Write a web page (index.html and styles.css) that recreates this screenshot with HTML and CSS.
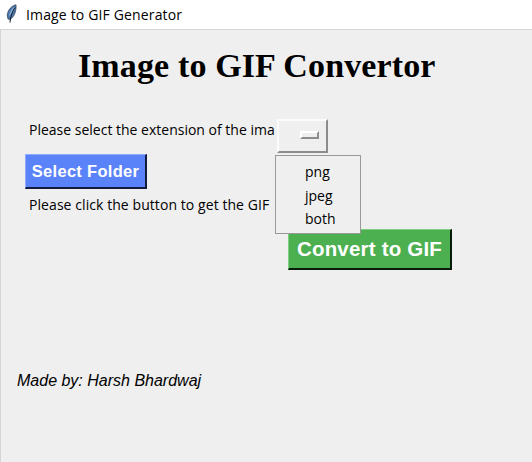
FILE: index.html
```html
<!DOCTYPE html>
<html lang="en">
<head>
<meta charset="utf-8">
<title>Image to GIF Generator</title>
<link rel="stylesheet" href="styles.css">
</head>
<body>
<header class="titlebar">
  <svg class="feather" width="14" height="20" viewBox="0 0 14 20">
    <path d="M11 .8C7 1.500 2.500 6 2.200 11.500L3 15L5 15.500C9 13 11.500 7.500 11 .8Z" fill="#4a76a8" stroke="#34465f" stroke-width=".8"/>
    <path d="M9.800 2.500C7 4 4.500 8 4 12.500C7 9 8.500 6 9.800 2.500Z" fill="#83b0dc"/>
    <path d="M10 3.500C7.500 7 5.500 12 5 18.500" fill="none" stroke="#18202c" stroke-width="1"/>
  </svg>
  <span class="caption">Image to GIF Generator</span>
</header>
<main class="window">
  <h1 class="heading">Image to GIF Convertor</h1>
  <div class="row row-extension">
    <label class="label label-extension">Please select the extension of the ima</label>
    <div class="option">
      <button class="option-button" aria-label="Extension"><span class="indicator"></span></button>
      <ul class="menu">
        <li>png</li>
        <li>jpeg</li>
        <li>both</li>
      </ul>
    </div>
  </div>
  <button class="button button-folder"><span>Select Folder</span></button>
  <div class="label label-convert">Please click the button to get the GIF</div>
  <button class="button button-convert"><span>Convert to GIF</span></button>
  <footer class="credit">Made by: Harsh Bhardwaj</footer>
</main>
</body>
</html>
```
FILE: styles.css
```css
* { box-sizing: border-box; }
body {
  margin: 0;
  height: 462px;
  display: flex;
  flex-direction: column;
  overflow: hidden;
  background: #efefef;
  color: #000;
  font-family: "Open Sans", "Noto Sans", sans-serif;
}
.titlebar {
  display: flex;
  align-items: center;
  height: 29px;
  flex: none;
  padding-left: 5px;
  background: #fff;
}
.feather { flex: none; margin-top: -2px; }
.caption {
  margin-left: 7px;
  font-size: 14px;
  letter-spacing: .15px;
  line-height: 20px;
  white-space: nowrap;
}
.window {
  flex: 1;
  display: flex;
  flex-direction: column;
  align-items: flex-start;
  border-top: 1px solid #d4d6d6;
  border-left: 1px solid #d4d6d6;
}
.heading {
  margin: 16px 0 0 77px;
  height: 40px;
  font: bold 34px/40px "Liberation Serif", serif;
  letter-spacing: .13px;
  white-space: nowrap;
}
.row { display: flex; }
.row-extension { height: 35px; margin: 33px 0 0 28px; }
.label {
  font-size: 14px;
  line-height: 20px;
  white-space: nowrap;
}
.label-extension { width: 248px; padding-top: 1px; }
.option { position: relative; }
.option-button {
  display: flex;
  align-items: center;
  justify-content: flex-end;
  width: 51px;
  height: 34px;
  padding: 0 7px 2px 0;
  background: #efefef;
  border: 2px solid;
  border-color: #fbfbfb #8c8c8c #8c8c8c #fbfbfb;
}
.indicator {
  width: 19px;
  height: 8px;
  border: 2px solid;
  border-color: #fff #8c8c8c #8c8c8c #fff;
}
.menu {
  position: absolute;
  left: -2px;
  top: 36px;
  z-index: 1;
  width: 86px;
  height: 79px;
  margin: 0;
  padding: 4px 0 0 29px;
  list-style: none;
  background: #efefef;
  border: 1px solid #999;
  font-size: 14px;
  line-height: 23.5px;
}
.button {
  display: flex;
  align-items: center;
  justify-content: center;
  padding: 0;
  color: #fff;
  border-style: solid;
  white-space: nowrap;
}
.button-folder {
  width: 122px;
  height: 35px;
  margin: 0 0 0 24px;
  background: #5a83fa;
  border-width: 1px 2px 2px 1px;
  border-color: #8eabff #101a3c #101a3c #8eabff;
  font: bold 16.5px/20px "Liberation Sans", sans-serif;
  letter-spacing: .3px;
}
.label-convert { margin: 6px 0 0 28px; letter-spacing: .07px; }
.button-convert {
  width: 164px;
  height: 41px;
  margin: 14px 0 0 287px;
  padding-bottom: 1px;
  background: #4caf50;
  border-width: 1px 2px 2px 1px;
  border-color: #7fce82 #081c09 #081c09 #7fce82;
  font: bold 20.5px/24px "Liberation Sans", sans-serif;
  letter-spacing: .2px;
}
.credit {
  margin: 101px 0 0 16px;
  font: italic 16px/20px "Liberation Sans", sans-serif;
  white-space: nowrap;
}
```
